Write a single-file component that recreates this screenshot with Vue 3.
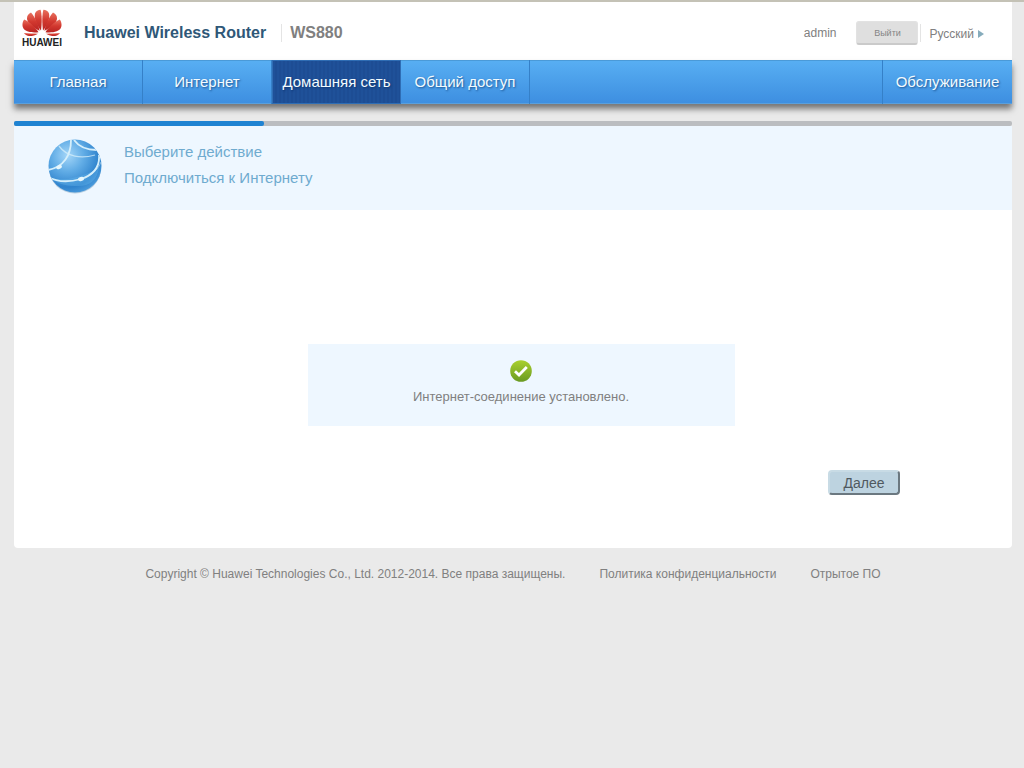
<script setup>
const tabs = [
  { label: 'Главная', active: false },
  { label: 'Интернет', active: false },
  { label: 'Домашняя сеть', active: true },
  { label: 'Общий доступ', active: false },
]
</script>

<template>
  <div class="page">
    <header class="top">
      <a class="logo" href="#" aria-label="Huawei">
        <svg width="40" height="28" viewBox="0 0 40 28" aria-hidden="true">
          <defs>
            <linearGradient id="petal" x1="0" y1="0" x2="0" y2="1">
              <stop offset="0" stop-color="#e8705e" />
              <stop offset="0.5" stop-color="#d2382f" />
              <stop offset="1" stop-color="#b82422" />
            </linearGradient>
          </defs>
          <g fill="url(#petal)">
            <path d="M19 21.500 C14.500 16 11.800 9.500 13 4.500 C14 2 16.200 1 18.600 .8 C20 6 20 14 19 21.500Z" />
            <path d="M17.600 21.800 C10.500 18.500 5 13.500 5 9.500 C5 6.500 6.800 4.600 9 3.600 C12.800 8 16.300 15 17.600 21.800Z" />
            <path d="M16.500 23.200 C10 24 2.500 22.800 1 18.500 C-.2 15.500 .8 12.500 2.200 10.500 C7.700 13 13.500 18.200 16.500 23.200Z" />
            <path d="M16 24.800 C12 26.800 7 28.200 4.200 26 C3 25.200 2.400 24.600 2 24 C6.500 24.500 12 24.500 16 24.800Z" />
            <path d="M21 21.500 C25.500 16 28.200 9.500 27 4.500 C26 2 23.800 1 21.400 .8 C20 6 20 14 21 21.500Z" />
            <path d="M22.400 21.800 C29.500 18.500 35 13.500 35 9.500 C35 6.500 33.200 4.600 31 3.600 C27.200 8 23.700 15 22.400 21.800Z" />
            <path d="M23.500 23.200 C30 24 37.500 22.800 39 18.500 C40.200 15.500 39.200 12.500 37.800 10.500 C32.300 13 26.500 18.200 23.500 23.200Z" />
            <path d="M24 24.800 C28 26.800 33 28.200 35.800 26 C37 25.200 37.600 24.600 38 24 C33.500 24.500 28 24.500 24 24.800Z" />
          </g>
        </svg>
        <span class="brand">HUAWEI</span>
      </a>
      <h1 class="title">Huawei Wireless Router</h1>
      <span class="model">WS880</span>
      <div class="account">
        <span class="user">admin</span>
        <button class="logout" type="button">Выйти</button>
        <button class="language" type="button">
          Русский
          <svg width="6" height="8" viewBox="0 0 6 8" aria-hidden="true">
            <path d="M0 0 L6 4 L0 8Z" fill="#86acbc" />
          </svg>
        </button>
      </div>
    </header>

    <nav class="nav">
      <a v-for="tab in tabs" :key="tab.label" class="tab" :class="{ active: tab.active }" href="#">{{ tab.label }}</a>
      <a class="tab service" href="#">Обслуживание</a>
    </nav>

    <div class="progress"><div class="done"></div></div>

    <main class="card">
      <section class="banner">
        <svg class="globe" width="56" height="56" viewBox="0 0 56 56" aria-hidden="true">
          <defs>
            <radialGradient id="sphere" cx="0.36" cy="0.3" r="0.75">
              <stop offset="0" stop-color="#a4d6f8" />
              <stop offset="0.4" stop-color="#62ade6" />
              <stop offset="0.8" stop-color="#2f83cd" />
              <stop offset="1" stop-color="#4c9cdc" />
            </radialGradient>
            <clipPath id="disc"><circle cx="28" cy="27" r="26.500" /></clipPath>
          </defs>
          <ellipse cx="28" cy="29.500" rx="26" ry="25" fill="#b9cfe0" />
          <circle cx="28" cy="27" r="26.500" fill="url(#sphere)" />
          <g clip-path="url(#disc)" fill="none" stroke="#d5effb">
            <path d="M4 39 Q24 44 52 29 Q49 47 31 47 Q14 48 4 39Z" fill="#69b9ed" fill-opacity=".35" stroke="none" />
            <path d="M24 1 C24 16 17 28 1 31" stroke-width="1.800" />
            <path d="M12 7 C20 18 34 20 48 16" stroke-width="1.300" opacity=".75" />
            <path d="M27 1 C32 8 41 11 50 11" stroke-width="1.800" />
            <path d="M1 38 C10 43 23 43 34 40 C46 36 53 28 52 16" stroke-width="1.800" />
            <path d="M34 41 C44 37 51 31 54 23" stroke-width="1" opacity=".5" />
          </g>
          <g fill="#e6f7fd">
            <ellipse cx="12" cy="28" rx="3" ry="2" transform="rotate(-25 12 28)" />
            <ellipse cx="34" cy="40" rx="3" ry="2" transform="rotate(-15 34 40)" />
          </g>
        </svg>
        <div class="steps">
          <p>Выберите действие</p>
          <p>Подключиться к Интернету</p>
        </div>
      </section>

      <section class="body">
        <div class="status" role="status">
          <svg width="22" height="22" viewBox="0 0 22 22" aria-hidden="true">
            <defs>
              <linearGradient id="ok" x1="0" y1="0" x2="0" y2="1">
                <stop offset="0" stop-color="#a9d02e" />
                <stop offset="1" stop-color="#6a9a22" />
              </linearGradient>
            </defs>
            <circle cx="11" cy="11" r="10.800" fill="url(#ok)" />
            <path d="M5 11.200 L9 15 L16.800 7" fill="none" stroke="#fff" stroke-width="2.800" />
          </svg>
          <p>Интернет-соединение установлено.</p>
        </div>
        <div class="actions">
          <button class="next" type="button">Далее</button>
        </div>
      </section>
    </main>

    <footer class="footer">
      <span>Copyright © Huawei Technologies Co., Ltd. 2012-2014. Все права защищены.</span>
      <a href="#">Политика конфиденциальности</a>
      <a href="#">Отрытое ПО</a>
    </footer>
  </div>
</template>

<style>
body {
  background: #eaeaea;
}
</style>

<style scoped>
.page {
  box-sizing: border-box;
  padding: 0 12px 0 14px;
  border-top: 2px solid #c4c2b6;
  font-family: "Liberation Sans", Arial, sans-serif;
  font-size: 12px;
  color: #808080;
}

p,
h1 {
  margin: 0;
}

a {
  color: inherit;
  text-decoration: none;
}

button {
  font-family: inherit;
  cursor: pointer;
}

.top {
  box-sizing: border-box;
  display: flex;
  align-items: center;
  height: 58px;
  padding: 4px 28px 0 8px;
  background: #fff;
}

.logo {
  display: flex;
  flex-direction: column;
  align-items: center;
  width: 40px;
  margin-right: 22px;
  padding-bottom: 8px;
}

.brand {
  font-size: 10px;
  font-weight: bold;
  line-height: 12px;
  color: #222;
}

.title {
  padding-right: 15px;
  border-right: 1px solid #e4e4e4;
  font-size: 16px;
  line-height: 18px;
  color: #2f5878;
}

.model {
  padding-left: 8px;
  font-size: 16px;
  font-weight: bold;
  line-height: 18px;
}

.account {
  display: flex;
  align-items: center;
  margin-left: auto;
}

.user {
  margin-right: 20px;
}

.logout {
  width: 62px;
  height: 24px;
  padding: 0;
  border: 1px solid #e2e2e2;
  border-bottom: 2px solid #cacaca;
  border-radius: 3px;
  background: #dfdfdf;
  font-size: 9px;
  color: #858585;
}

.language {
  display: flex;
  align-items: center;
  gap: 4px;
  height: 18px;
  margin-left: 2px;
  padding: 2px 0 0 8px;
  border: 0;
  border-left: 1px solid #e4e4e4;
  background: none;
  font-size: 12px;
  color: #808080;
}

.nav {
  display: flex;
  height: 44px;
  background: linear-gradient(#58aff3, #3d8ee0);
  box-shadow: inset 0 1px 0 #4a9ad8, inset 0 -1px 0 #5a9fdc, 0 5px 6px rgba(0, 0, 0, 0.5);
}

.tab {
  box-sizing: border-box;
  width: 129px;
  border-right: 1px solid #3580c8;
  font-size: 15px;
  line-height: 44px;
  text-align: center;
  white-space: nowrap;
  color: #f2fbff;
  text-shadow: 1px 1px 2px rgba(0, 40, 90, 0.6);
}

.tab.active {
  border: 1px solid #2f6db4;
  line-height: 42px;
  background: repeating-linear-gradient(90deg, #1f5199 0 2px, #1d4d94 2px 4px);
}

.service {
  width: 130px;
  margin-left: auto;
  border-right: 0;
  border-left: 1px solid #3580c8;
}

.progress {
  height: 5px;
  margin-top: 17px;
  border-radius: 2px;
  background: #bbbdc0;
}

.done {
  width: 25%;
  height: 5px;
  border-radius: 2px;
  background: #1f83d2;
}

.card {
  overflow: hidden;
  border-radius: 0 0 4px 4px;
  background: #fff;
}

.banner {
  display: flex;
  gap: 21px;
  height: 71px;
  padding: 13px 33px 0;
  background: #eef7ff;
}

.steps {
  font-size: 15px;
  line-height: 26px;
  color: #6fabcf;
}

.body {
  padding: 134px 112px 53px 128px;
}

.status {
  display: flex;
  flex-direction: column;
  align-items: center;
  width: 427px;
  margin: 0 auto;
  padding: 16px 0 20px;
  background: #eef7ff;
  font-size: 13px;
}

.status p {
  margin-top: 6px;
  line-height: 18px;
}

.actions {
  display: flex;
  justify-content: flex-end;
  margin-top: 44px;
}

.next {
  width: 72px;
  height: 25px;
  padding: 0;
  border: 2px solid;
  border-color: #c8dbe5 #6b7880 #6b7880 #c8dbe5;
  border-radius: 4px;
  background: #bdd3e0;
  font-size: 14px;
  color: #50595f;
}

.footer {
  display: flex;
  justify-content: center;
  gap: 34px;
  padding: 18px 0;
  line-height: 16px;
}
</style>
